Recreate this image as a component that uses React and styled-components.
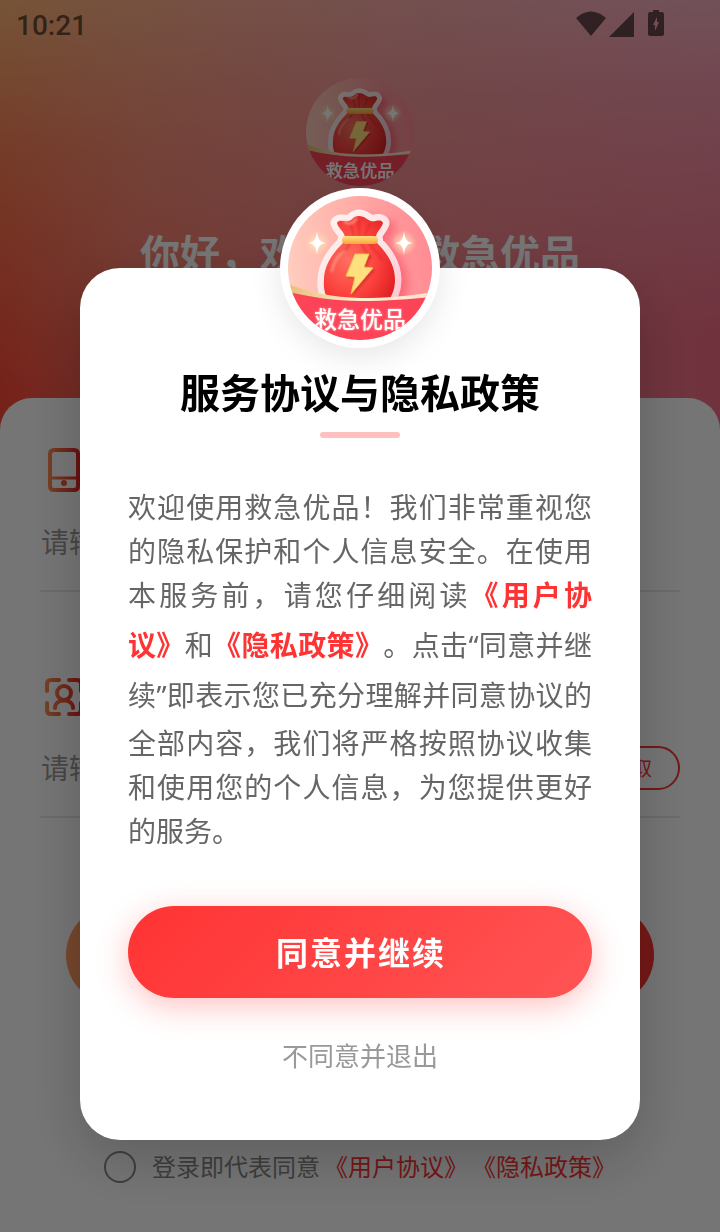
import { useId } from 'react';
import styled, { createGlobalStyle } from 'styled-components';

const GlobalStyle = createGlobalStyle`
    * {
        box-sizing: border-box;
    }

    body {
        margin: 0;
        font-family: 'Noto Sans CJK SC', sans-serif;
        text-spacing-trim: space-all;
    }

    button,
    input {
        font-family: inherit;
    }
`;

const Page = styled.div`
    position: relative;
    isolation: isolate;
    display: flex;
    flex-direction: column;
    min-height: 100vh;
    background: linear-gradient(90deg, #ff4a38, #fa7068 20%, #f47c80 50%, #f47088);

    &::before {
        content: '';
        position: absolute;
        inset: 0 0 auto;
        z-index: -1;
        height: 400px;
        background: linear-gradient(90deg, #ffb878, #ffb29c 33%, #fab4b4 60%, #fac2d2);
        mask-image: linear-gradient(175deg, #000, rgba(0, 0, 0, 0.5) 33%, transparent 85%);
    }
`;

const StatusBar = styled.div`
    display: flex;
    align-items: center;
    justify-content: space-between;
    height: 50px;
    padding: 0 56px 0 16px;
    color: rgba(0, 0, 0, 0.58);
    font-family: Roboto, sans-serif;
    font-size: 28px;
    font-weight: 500;
`;

const StatusIcons = styled.svg`
    width: 88px;
    height: 50px;
`;

const Hero = styled.header`
    display: flex;
    flex-direction: column;
    align-items: center;
    padding: 28px 0 118px;
`;

const HeroLogo = styled.div`
    width: 108px;
    height: 108px;
`;

const Greeting = styled.h1`
    margin: 38px 0 0;
    color: #fff;
    font-size: 40px;
    line-height: 56px;
`;

const Sheet = styled.main`
    display: flex;
    flex: 1;
    flex-direction: column;
    padding: 50px 40px 40px;
    border-radius: 32px 32px 0 0;
    background: #fff;
`;

const Field = styled.div`
    display: flex;
    flex-direction: column;
    margin-bottom: 82px;
    border-bottom: 2px solid #e8e8e8;
`;

const FieldLabel = styled.label`
    height: 46px;

    svg {
        display: block;
        height: 46px;
        width: 48px;
    }
`;

const FieldRow = styled.div`
    display: flex;
    align-items: center;
    height: 96px;
`;

const TextInput = styled.input`
    flex: 1;
    min-width: 0;
    padding: 0 0 2px 1px;
    border: 0;
    outline: 0;
    background: none;
    font-size: 28px;

    &::placeholder {
        color: #999;
    }
`;

const CodeButton = styled.button`
    height: 44px;
    padding: 0 26px 2px;
    border: 2px solid #f33;
    border-radius: 22px;
    background: none;
    color: #f33;
    font-size: 20px;
`;

const LoginButton = styled.button`
    height: 100px;
    margin: 5px 26px 0;
    border: 0;
    border-radius: 50px;
    background: linear-gradient(90deg, #ff9c60, #f33);
`;

const Consent = styled.div`
    display: flex;
    align-items: center;
    justify-content: center;
    gap: 16px;
    margin-top: 139px;
    color: #888;
    font-size: 24px;
    line-height: 44px;
`;

const RoundCheck = styled.input`
    appearance: none;
    width: 32px;
    height: 32px;
    margin: 0;
    border: 2px solid #888;
    border-radius: 50%;
`;

const ConsentText = styled.div`
    display: flex;
    gap: 4px;
    padding-bottom: 2px;
`;

const PlainLink = styled.a`
    color: #f33;
    text-decoration: none;
`;

const Overlay = styled.div`
    position: fixed;
    inset: 0;
    padding: 268px 80px 0;
    background: rgba(0, 0, 0, 0.54);
`;

const Dialog = styled.section`
    position: relative;
    display: flex;
    flex-direction: column;
    align-items: center;
    padding: 95px 48px 58px;
    border-radius: 40px;
    background: #fff;
    box-shadow: 0 20px 60px rgba(0, 0, 0, 0.2);
`;

const DialogLogo = styled.div`
    position: absolute;
    top: -80px;
    left: calc(50% - 80px);
    width: 160px;
    height: 160px;
    border: 8px solid #fff;
    border-radius: 50%;
    background: #fff;
    box-shadow: 0 8px 32px rgba(0, 0, 0, 0.1);
`;

const DialogTitle = styled.h2`
    margin: 0;
    color: #000;
    font-size: 40px;
    line-height: 56px;

    &::after {
        content: '';
        display: block;
        width: 80px;
        height: 6px;
        margin: 13px auto 0;
        border-radius: 3px;
        background: #ffc0c0;
    }
`;

const DialogText = styled.p`
    margin: 46px 0 0;
    color: #666;
    font-size: 28px;
    line-height: 44px;
    text-align: justify;
`;

const BoldLink = styled(PlainLink)`
    font-weight: 700;
`;

const Quote = styled.span`
    display: inline-block;
    padding: ${({ $closing }) => ($closing ? '6px 0 3px' : '7px 0 0')};
    font-family: 'Noto Sans', sans-serif;
`;

const AgreeButton = styled.button`
    width: 100%;
    height: 92px;
    margin-top: 54px;
    padding: 0 0 2px 2px;
    border: 0;
    border-radius: 46px;
    background: linear-gradient(135deg, #f33, #f55);
    box-shadow: 0 8px 32px rgba(255, 51, 51, 0.3);
    color: #fff;
    font-size: 32px;
    font-weight: 700;
    letter-spacing: 2px;
`;

const DeclineButton = styled.button`
    height: 52px;
    margin-top: 30px;
    margin-bottom: 2px;
    padding: 0;
    border: 0;
    background: none;
    color: #999;
    font-size: 26px;
`;

const LogoSvg = styled.svg`
    display: block;
    width: 100%;
    height: 100%;
`;

const BAG =
    'M57 41C56 35 50 32 49 27C51 23 56 26 60 25C64 25 65 20 71 20C77 20 79 24 83 25C88 26 93 22 95 27C94 32 88 36 88 41L89 47C98 56 107 68 107 84C107 94 103 102 98 108H44C38 102 35 94 36 84C36 68 46 56 55 47Z';

const SPARK = 'M0-12C1-3 3-1 9 0C3 1 1 3 0 12C-1 3-3 1-9 0C-3-1-1-3 0-12Z';

const Logo = () => {
    const id = useId();
    const ref = (name) => `url(#${id}${name})`;

    return (
        <LogoSvg viewBox="0 0 144 144" role="img" aria-label="救急优品">
            <defs>
                <clipPath id={`${id}clip`}>
                    <circle cx="72" cy="72" r="72" />
                </clipPath>
                <linearGradient id={`${id}sky`} x1="0" y1="0.6" x2="1" y2="0.5">
                    <stop offset="0" stopColor="#ffcdbf" />
                    <stop offset="0.5" stopColor="#ffaca6" />
                    <stop offset="0.8" stopColor="#ff969a" />
                    <stop offset="1" stopColor="#ff8c94" />
                </linearGradient>
                <radialGradient id={`${id}bag`} cx="0.35" cy="0.5" r="0.7">
                    <stop offset="0" stopColor="#ff7060" />
                    <stop offset="0.6" stopColor="#fb3f3c" />
                    <stop offset="1" stopColor="#df2222" />
                </radialGradient>
                <linearGradient id={`${id}rim`} x1="0" y1="0" x2="1" y2="1">
                    <stop offset="0" stopColor="#fff3ee" />
                    <stop offset="0.6" stopColor="#fbe3e6" />
                    <stop offset="1" stopColor="#ffc4d2" />
                </linearGradient>
                <linearGradient id={`${id}gold`} x1="0" y1="0" x2="0" y2="1">
                    <stop offset="0" stopColor="#ffe07c" />
                    <stop offset="1" stopColor="#f8a53d" />
                </linearGradient>
                <linearGradient id={`${id}strip`}>
                    <stop offset="0" stopColor="#e9bd78" />
                    <stop offset="0.5" stopColor="#fff0d0" />
                    <stop offset="1" stopColor="#ffe2cc" />
                </linearGradient>
                <radialGradient id={`${id}glow`}>
                    <stop offset="0" stopColor="#fff5cf" />
                    <stop offset="0.4" stopColor="#ffe3b8" stopOpacity="0.6" />
                    <stop offset="1" stopColor="#ffd9b0" stopOpacity="0" />
                </radialGradient>
                <filter id={`${id}blur`} x="-30%" y="-30%" width="160%" height="160%">
                    <feGaussianBlur stdDeviation="4" />
                </filter>
                <filter id={`${id}soft`}>
                    <feGaussianBlur stdDeviation="1" />
                </filter>
            </defs>
            <g clipPath={ref('clip')}>
                <rect width="144" height="144" fill={ref('sky')} />
                <path
                    d={BAG}
                    transform="translate(8 4)"
                    fill="#f63d58"
                    stroke="#f63d58"
                    strokeWidth="10"
                    opacity="0.5"
                    filter={ref('blur')}
                />
                <path
                    d={BAG}
                    fill={ref('rim')}
                    stroke={ref('rim')}
                    strokeWidth="13"
                    strokeLinejoin="round"
                />
                <path d={BAG} fill={ref('bag')} />
                <path
                    d="M62 27L66 39M71 24V39M82 28L77 39M62 48C59 53 56 55 53 57M74 48C76 55 80 58 82 62M82 48C86 55 91 58 94 63"
                    fill="none"
                    stroke="#cf2323"
                    strokeWidth="2"
                    strokeLinecap="round"
                    opacity="0.45"
                    filter={ref('soft')}
                />
                <path
                    d="M57 26C62 29 65 27 68 23M44 75C45 66 50 60 56 55"
                    fill="none"
                    stroke="#ff9a8a"
                    strokeWidth="3"
                    strokeLinecap="round"
                    opacity="0.7"
                    filter={ref('soft')}
                />
                <rect x="54" y="40" width="36" height="8" rx="4" fill={ref('gold')} />
                <path
                    d="M68 60L83 59L78 73L87 74L65 99L69 82L60 81Z"
                    fill="#c22420"
                    opacity="0.6"
                    filter={ref('soft')}
                />
                <path
                    d="M67 58H81L76 71L85 72L63 98L67 81L58 80Z"
                    fill="#ffe07e"
                    stroke="#f7c04c"
                    strokeWidth="1"
                    strokeLinejoin="round"
                />
                <path
                    d="M0 88C24 97 44 101 72 102C98 102 122 100 144 96V110H0Z"
                    fill={ref('strip')}
                />
                <path
                    d="M0 96C24 101 46 105 72 105C100 105 122 103 144 101V144H0Z"
                    fill="#fc4358"
                />
                <text
                    x="72"
                    y="132"
                    fill="#ffb5b5"
                    fontSize="23"
                    fontWeight="500"
                    textAnchor="middle"
                    filter={ref('soft')}
                    aria-hidden="true"
                >
                    救急优品
                </text>
                <text x="72" y="132" fill="#fff" fontSize="23" fontWeight="500" textAnchor="middle">
                    救急优品
                </text>
                <circle cx="29" cy="47" r="13" fill={ref('glow')} />
                <circle cx="116" cy="47" r="13" fill={ref('glow')} />
                <path d={SPARK} transform="translate(29 47)" fill="#fff" />
                <path d={SPARK} transform="translate(116 47)" fill="#fff" />
            </g>
        </LogoSvg>
    );
};

const PhoneIcon = () => (
    <svg viewBox="0 0 48 46" fill="none" stroke="url(#phone)" strokeWidth="4">
        <defs>
            <linearGradient id="phone" gradientUnits="userSpaceOnUse" x1="8" y1="0" x2="40" y2="0">
                <stop stopColor="#ff9050" />
                <stop offset="1" stopColor="#e02020" />
            </linearGradient>
        </defs>
        <path d="M14 2H34Q38 2 38 6V38Q38 42 34 42H14Q10 42 10 38V6Q10 2 14 2Z" />
        <path d="M10 30H38" strokeWidth="3" />
        <circle cx="24" cy="35" r="3" fill="#ee5838" stroke="none" />
    </svg>
);

const PersonIcon = () => (
    <svg viewBox="0 0 48 46" fill="none" stroke="url(#person)" strokeWidth="4" strokeLinecap="round">
        <defs>
            <linearGradient id="person" gradientUnits="userSpaceOnUse" x1="5" y1="0" x2="43" y2="0">
                <stop stopColor="#ff9050" />
                <stop offset="1" stopColor="#e02020" />
            </linearGradient>
        </defs>
        <path d="M19 6H11Q7 6 7 10V17M29 6H37Q41 6 41 10V17M7 29V36Q7 40 11 40H19M41 29V36Q41 40 37 40H29" />
        <circle cx="24" cy="19" r="7" />
        <path d="M15 34C15 24 33 24 33 34" />
    </svg>
);

const App = () => (
    <>
        <GlobalStyle />
        <Page>
            <StatusBar>
                <span>10:21</span>
                <StatusIcons viewBox="0 0 88 50" fill="currentColor" aria-hidden="true">
                    <path d="M0 18Q15 5 30 18L15 36Z" />
                    <path d="M33 37L58 12V37Z" />
                    <path
                        fillRule="evenodd"
                        d="M77 10H83V12H86Q88 12 88 14V34Q88 36 86 36H74Q72 36 72 34V14Q72 12 74 12H77ZM81 17L77 25H79V31L83 22H81Z"
                    />
                </StatusIcons>
            </StatusBar>
            <Hero>
                <HeroLogo>
                    <Logo />
                </HeroLogo>
                <Greeting>你好，欢迎来到救急优品</Greeting>
            </Hero>
            <Sheet>
                <Field>
                    <FieldLabel htmlFor="phone-number" aria-label="手机号">
                        <PhoneIcon />
                    </FieldLabel>
                    <FieldRow>
                        <TextInput id="phone-number" type="tel" placeholder="请输入手机号" />
                    </FieldRow>
                </Field>
                <Field>
                    <FieldLabel htmlFor="sms-code" aria-label="验证码">
                        <PersonIcon />
                    </FieldLabel>
                    <FieldRow>
                        <TextInput id="sms-code" placeholder="请输入验证码" />
                        <CodeButton type="button">点击获取</CodeButton>
                    </FieldRow>
                </Field>
                <LoginButton type="button" aria-label="登录" />
                <Consent>
                    <RoundCheck id="consent" type="checkbox" />
                    <ConsentText>
                        <label htmlFor="consent">登录即代表同意</label>
                        <PlainLink href="#terms">《用户协议》</PlainLink>
                        <PlainLink href="#privacy">《隐私政策》</PlainLink>
                    </ConsentText>
                </Consent>
            </Sheet>
        </Page>
        <Overlay>
            <Dialog role="dialog" aria-modal="true" aria-labelledby="dialog-title">
                <DialogLogo>
                    <Logo />
                </DialogLogo>
                <DialogTitle id="dialog-title">服务协议与隐私政策</DialogTitle>
                <DialogText>
                    欢迎使用救急优品！我们非常重视您的隐私保护和个人信息安全。在使用本服务前，请您仔细阅读
                    <BoldLink href="#terms">《用户协议》</BoldLink>和
                    <BoldLink href="#privacy">《隐私政策》</BoldLink>。点击<Quote>“</Quote>
                    同意并继续<Quote $closing>”</Quote>
                    即表示您已充分理解并同意协议的全部内容，我们将严格按照协议收集和使用您的个人信息，为您提供更好的服务。
                </DialogText>
                <AgreeButton type="button">同意并继续</AgreeButton>
                <DeclineButton type="button">不同意并退出</DeclineButton>
            </Dialog>
        </Overlay>
    </>
);

export default App;
